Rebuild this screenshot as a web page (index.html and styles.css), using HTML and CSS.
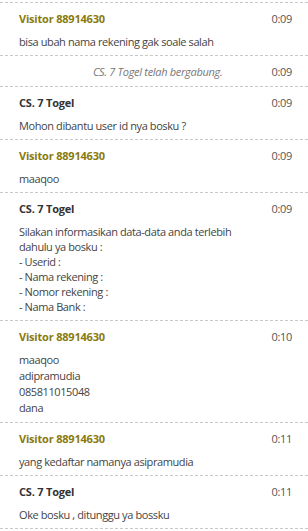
FILE: index.html
```html
<!DOCTYPE html>
<html lang="id">
<head>
<meta charset="utf-8">
<title>Chat</title>
<link rel="stylesheet" href="styles.css">
</head>
<body>
<div class="chat">
  <div class="edge"></div>

  <div class="msg">
    <div class="head"><span class="name visitor">Visitor 88914630</span><span class="time">0:09</span></div>
    <div class="body">bisa ubah nama rekening gak soale salah</div>
  </div>

  <div class="sys">
    <span class="sys-text">CS. 7 Togel telah bergabung.</span><span class="time">0:09</span>
  </div>

  <div class="msg">
    <div class="head"><span class="name agent">CS. 7 Togel</span><span class="time">0:09</span></div>
    <div class="body">Mohon dibantu user id nya bosku ?</div>
  </div>

  <div class="msg">
    <div class="head"><span class="name visitor">Visitor 88914630</span><span class="time">0:09</span></div>
    <div class="body">maaqoo</div>
  </div>

  <div class="msg">
    <div class="head"><span class="name agent">CS. 7 Togel</span><span class="time">0:09</span></div>
    <div class="body">Silakan informasikan data-data anda terlebih<br>dahulu ya bosku :<br>- Userid :<br>- Nama rekening :<br>- Nomor rekening :<br>- Nama Bank :</div>
  </div>

  <div class="msg">
    <div class="head"><span class="name visitor">Visitor 88914630</span><span class="time">0:10</span></div>
    <div class="body loose">maaqoo<br>adipramudia<br>085811015048<br>dana</div>
  </div>

  <div class="msg">
    <div class="head"><span class="name visitor">Visitor 88914630</span><span class="time">0:11</span></div>
    <div class="body">yang kedaftar namanya asipramudia</div>
  </div>

  <div class="msg">
    <div class="head"><span class="name agent">CS. 7 Togel</span><span class="time">0:11</span></div>
    <div class="body">Oke bosku , ditunggu ya bossku</div>
  </div>
</div>
</body>
</html>
```

FILE: styles.css
```css
html, body {
  margin: 0;
  padding: 0;
  background: #fff;
}

.chat {
  font-family: "Open Sans", "Noto Sans", sans-serif;
  font-size: 11px;
  letter-spacing: -0.3px;
  line-height: 15px;
  color: #444;
  width: 308px;
}

.edge {
  height: 2px;
  border-bottom: 1px dashed #c8c8c8;
}

.msg {
  padding: 8px 16px 6px 19px;
  border-bottom: 1px dashed #c8c8c8;
}

.head {
  display: flex;
  justify-content: space-between;
  margin-bottom: 8px;
}

.name {
  font-weight: 700;
  letter-spacing: -0.2px;
}

.name.visitor {
  color: #8a7a0c;
}

.name.agent {
  color: #333;
}

.time {
  color: #555;
}

.body {
  letter-spacing: -0.4px;
}

.body.loose {
  line-height: 16px;
}

.sys {
  display: flex;
  justify-content: flex-end;
  align-items: center;
  height: 30px;
  padding-right: 16px;
  border-bottom: 1px dashed #c8c8c8;
}

.sys-text {
  font-style: italic;
  color: #777;
  margin-right: 49px;
}
```
